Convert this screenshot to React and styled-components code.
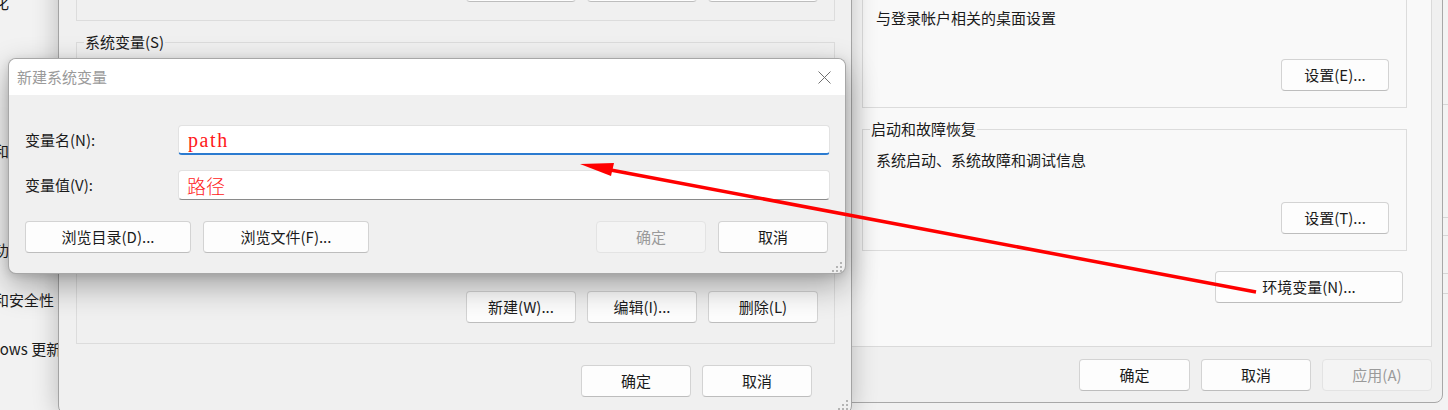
import React from "react";
import styled, { createGlobalStyle } from "styled-components";

const GlobalStyle = createGlobalStyle`
  html, body { margin: 0; padding: 0; }
  body {
    font-family: "Noto Sans CJK SC", "Noto Sans", sans-serif;
    font-size: 15px;
    color: #1b1b1b;
    background: #efefef;
  }
  * { box-sizing: border-box; }
`;

const Desktop = styled.div`
  position: relative;
  width: 1448px;
  height: 410px;
  overflow: hidden;
  background: #f1f1f1;
`;

/* settings app peeking out on the left */
const SettingsWindow = styled.aside`
  position: absolute;
  left: -45px;
  top: -22px;
  width: 250px;
  height: 460px;
  z-index: 1;
  background: #f2f2f2;
  display: flex;
  flex-direction: column;
  padding-left: 9px;
`;

const NavItem = styled.div`
  height: 49.5px;
  display: flex;
  align-items: center;
  white-space: nowrap;
  line-height: 20px;
`;

/* some other window at the far right */
const BackStrip = styled.div`
  position: absolute;
  left: 1440px;
  top: 0;
  width: 20px;
  height: 410px;
  background: #f3f3f3;
  display: flex;
  flex-direction: column;
`;

const StripRow = styled.div`
  height: ${(p) => p.$h}px;
  border-bottom: 1px solid #d6d6d6;
  flex-shrink: 0;
`;

/* 环境变量 */
const EnvWindow = styled.section`
  position: absolute;
  left: 58px;
  top: -130px;
  width: 794px;
  height: 544px;
  z-index: 3;
  background: #f0f0f0;
  border: 1px solid #a3a3a3;
  border-radius: 0 0 8px 8px;
  box-shadow: 0 0 26px rgba(0, 0, 0, 0.24);
  display: flex;
  flex-direction: column;
  padding: 10px 16px 0 17px;
`;

const GroupBox = styled.div`
  position: relative;
  height: ${(p) => p.$h}px;
  margin-top: ${(p) => p.$mt || 0}px;
  border: 1px solid #dcdcdc;
  display: flex;
  flex-direction: column;
  justify-content: ${(p) => p.$justify || "space-between"};
  padding: ${(p) => p.$pad};
  flex-shrink: 0;
`;

const Legend = styled.span`
  position: absolute;
  left: 7px;
  top: -11px;
  padding: 0 1px;
  line-height: 20px;
  background: ${(p) => p.$bg};
  white-space: nowrap;
`;

const ButtonRow = styled.div`
  display: flex;
  justify-content: ${(p) => p.$justify || "flex-end"};
  gap: ${(p) => (p.$gap !== undefined ? p.$gap : 11)}px;
  margin-top: ${(p) => p.$mt || 0}px;
  padding-right: ${(p) => p.$pr || 0}px;
  flex-shrink: 0;
`;

const Button = styled.button`
  height: 32px;
  width: ${(p) => p.$w || 110}px;
  flex-shrink: 0;
  padding: 0;
  margin-right: ${(p) => p.$mr || 0}px;
  border: 1px solid #d3d3d3;
  border-bottom-color: #bdbdbd;
  border-radius: 4px;
  background: #fdfdfd;
  font-family: inherit;
  font-size: 15px;
  line-height: 20px;
  color: #1b1b1b;
  align-self: ${(p) => p.$self || "auto"};

  &:disabled {
    background: #f4f4f4;
    border-color: #e3e3e3;
    color: #9a9a9a;
  }
`;

const Spacer = styled.div`
  flex: 1;
`;

const Grip = styled.svg`
  position: absolute;
  right: ${(p) => p.$r}px;
  bottom: ${(p) => p.$b}px;
`;

/* 系统属性 */
const SysWindow = styled.section`
  position: absolute;
  left: 838px;
  top: -130px;
  width: 605px;
  height: 533px;
  z-index: 2;
  background: #f0f0f0;
  border: 1px solid #a8a8a8;
  border-radius: 0 0 8px 0;
  display: flex;
  flex-direction: column;
  padding: 0 10px 0 11px;
`;

const TabPanel = styled.div`
  margin-top: 59px;
  height: 417px;
  background: #f9f9f9;
  border: 1px solid #dadada;
  display: flex;
  flex-direction: column;
  padding: 0 24px 0 11px;
  flex-shrink: 0;
`;

const GroupText = styled.div`
  line-height: 20px;
  white-space: nowrap;
`;

/* 新建系统变量 */
const NewVarDialog = styled.section`
  position: absolute;
  left: 8px;
  top: 58px;
  width: 838px;
  height: 216px;
  z-index: 4;
  border: 1px solid rgba(0, 0, 0, 0.3);
  border-radius: 8px;
  overflow: hidden;
  background: #f0f0f0;
  box-shadow: 0 12px 32px rgba(0, 0, 0, 0.32), 0 2px 8px rgba(0, 0, 0, 0.12);
  display: flex;
  flex-direction: column;
`;

const TitleBar = styled.header`
  height: 36px;
  background: #ffffff;
  display: flex;
  align-items: center;
  justify-content: space-between;
  padding: 0 14px 0 8px;
  flex-shrink: 0;
`;

const Title = styled.span`
  color: #9a9a9a;
  line-height: 20px;
`;

const DialogBody = styled.div`
  flex: 1;
  display: flex;
  flex-direction: column;
  padding: 30px 15px 20px 16px;
`;

const FieldGrid = styled.div`
  display: grid;
  grid-template-columns: 153px 1fr;
  row-gap: 15px;
  align-items: center;
`;

const FieldLabel = styled.label`
  line-height: 20px;
  white-space: nowrap;
`;

const TextInput = styled.input`
  height: 30px;
  width: 100%;
  margin: 0;
  background: #ffffff;
  border: 1px solid #e2e2e2;
  border-bottom: ${(p) => (p.$focused ? "2px solid #2b7bd0" : "1px solid #8a8a8a")};
  border-radius: 4px;
  padding: ${(p) => (p.$latin ? "2px 0 0 9px" : "0 0 0 8px")};
  outline: none;
  color: #ff1a1a;
  font-family: ${(p) =>
    p.$latin ? '"Liberation Serif", "Noto Sans CJK SC", serif' : '"Noto Sans CJK SC", sans-serif'};
  font-size: ${(p) => (p.$latin ? 20 : 19)}px;
  font-weight: ${(p) => (p.$latin ? 400 : 300)};
  letter-spacing: ${(p) => (p.$latin ? "1.6px" : "0")};
`;

const Overlay = styled.svg`
  position: absolute;
  left: 0;
  top: 0;
  z-index: 10;
  pointer-events: none;
`;

const navItems = ["个性化", "应用", "帐户", "时间和语言", "游戏", "辅助功能", "隐私和安全性", "Windows 更新", "关于"];

const GripDots = ({ r, b }) => (
  <Grip $r={r} $b={b} width="10" height="10" viewBox="0 0 10 10">
    {[
      [8, 0],
      [4, 4],
      [8, 4],
      [0, 8],
      [4, 8],
      [8, 8],
    ].map(([x, y]) => (
      <rect key={`${x}-${y}`} x={x} y={y} width="2" height="2" fill="#b4b4b4" />
    ))}
  </Grip>
);

export default function App() {
  return (
    <Desktop>
      <GlobalStyle />

      <SettingsWindow>
        {navItems.map((item) => (
          <NavItem key={item}>{item}</NavItem>
        ))}
      </SettingsWindow>

      <BackStrip>
        <StripRow $h={105} />
        <StripRow $h={113} />
        <StripRow $h={18} />
        <StripRow $h={38} />
        <StripRow $h={20} />
      </BackStrip>

      <SysWindow>
        <TabPanel>
          <GroupBox $h={128} $mt={49} $pad="27px 17px 16px 13px">
            <GroupText>与登录帐户相关的桌面设置</GroupText>
            <Button $w={108} $self="flex-end">设置(E)...</Button>
          </GroupBox>
          <GroupBox $h={122} $mt={21} $pad="20px 17px 16px 13px">
            <Legend $bg="#f9f9f9">启动和故障恢复</Legend>
            <GroupText>系统启动、系统故障和调试信息</GroupText>
            <Button $w={108} $self="flex-end">设置(T)...</Button>
          </GroupBox>
          <ButtonRow $mt={20}>
            <Button $w={188} $mr={4}>环境变量(N)...</Button>
          </ButtonRow>
        </TabPanel>
        <ButtonRow $mt={12}>
          <Button $w={111}>确定</Button>
          <Button $w={110}>取消</Button>
          <Button $w={110} disabled>
            应用(A)
          </Button>
        </ButtonRow>
      </SysWindow>

      <EnvWindow>
        <GroupBox $h={140} $justify="flex-end" $pad="0 16px 18px 0">
          <ButtonRow>
            <Button>新建(U)...</Button>
            <Button>编辑(E)...</Button>
            <Button>删除(D)</Button>
          </ButtonRow>
        </GroupBox>
        <GroupBox $h={302} $mt={21} $justify="flex-end" $pad="0 16px 20px 0">
          <Legend $bg="#f0f0f0">系统变量(S)</Legend>
          <ButtonRow>
            <Button>新建(W)...</Button>
            <Button>编辑(I)...</Button>
            <Button>删除(L)</Button>
          </ButtonRow>
        </GroupBox>
        <ButtonRow $mt={21} $pr={23}>
          <Button>确定</Button>
          <Button>取消</Button>
        </ButtonRow>
        <GripDots r={3} b={3} />
      </EnvWindow>

      <NewVarDialog>
        <TitleBar>
          <Title>新建系统变量</Title>
          <svg width="13" height="13" viewBox="0 0 13 13">
            <path d="M0.5 0.5 L12.5 12.5 M12.5 0.5 L0.5 12.5" stroke="#707070" strokeWidth="1" fill="none" />
          </svg>
        </TitleBar>
        <DialogBody>
          <FieldGrid>
            <FieldLabel htmlFor="varName">变量名(N):</FieldLabel>
            <TextInput id="varName" $focused $latin readOnly defaultValue="path" />
            <FieldLabel htmlFor="varValue">变量值(V):</FieldLabel>
            <TextInput id="varValue" readOnly defaultValue="路径" />
          </FieldGrid>
          <ButtonRow $mt={21} $gap={12} $pr={2}>
            <Button $w={166}>浏览目录(D)...</Button>
            <Button $w={166}>浏览文件(F)...</Button>
            <Spacer />
            <Button disabled>确定</Button>
            <Button>取消</Button>
          </ButtonRow>
        </DialogBody>
        <GripDots r={3} b={1} />
      </NewVarDialog>

      <Overlay width="1448" height="410" viewBox="0 0 1448 410">
        <line x1="1256" y1="292" x2="608" y2="169.5" stroke="#ff0000" strokeWidth="3.5" />
        <polygon points="580,164 614,163 611,176" fill="#ff0000" />
      </Overlay>
    </Desktop>
  );
}
